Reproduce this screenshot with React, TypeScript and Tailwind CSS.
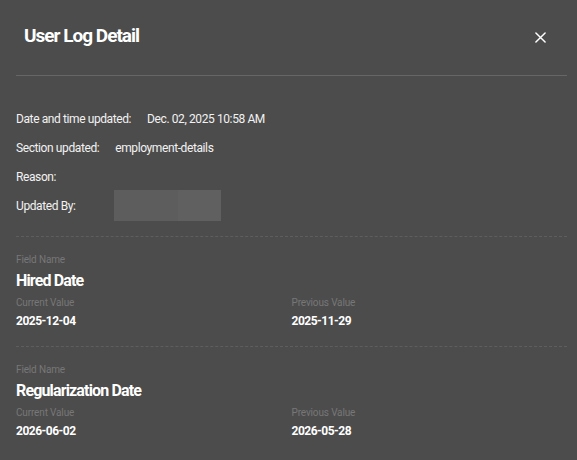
import React from 'react';

type FieldChange = {
  name: string;
  current: string;
  previous: string;
};

const changes: FieldChange[] = [
  { name: 'Hired Date', current: '2025-12-04', previous: '2025-11-29' },
  { name: 'Regularization Date', current: '2026-06-02', previous: '2026-05-28' },
];

function CloseIcon() {
  return (
    <svg width="11" height="11" viewBox="0 0 12 12" fill="none" stroke="currentColor" strokeWidth="1.6" strokeLinecap="round">
      <path d="M1 1L11 11M11 1L1 11" />
    </svg>
  );
}

function InfoRow({ label, children }: { label: string; children?: React.ReactNode }) {
  return (
    <div className="flex h-[29px] items-center gap-4 text-[12px] text-[#f2f2f2]">
      <span>{label}</span>
      {children}
    </div>
  );
}

export default function App() {
  return (
    <div
      className="min-h-[460px] w-full bg-[#4c4c4c] text-white"
      style={{ fontFamily: 'Roboto, "Liberation Sans", sans-serif' }}
    >
      {/* header */}
      <div className="flex items-center justify-between pl-6 pr-[31px] pt-6">
        <h1 className="text-[19px] font-bold leading-6 tracking-[-1px]">User Log Detail</h1>
        <button className="mt-[2px] text-white">
          <CloseIcon />
        </button>
      </div>
      <div className="ml-4 mr-[10px] mt-[27px] border-t border-[#666666]" />

      {/* summary */}
      <div className="px-4 pt-[28px] tracking-[-0.4px]">
        <InfoRow label="Date and time updated:">
          <span>Dec. 02, 2025 10:58 AM</span>
        </InfoRow>
        <InfoRow label="Section updated:">
          <span>employment-details</span>
        </InfoRow>
        <InfoRow label="Reason:" />
        <InfoRow label="Updated By:">
          <div className="ml-[22px] flex h-[31px] w-[107px]">
            <div className="w-[64px] bg-[#5d5d5d]" />
            <div className="flex-1 bg-[#606060]" />
          </div>
        </InfoRow>
      </div>

      {/* field changes */}
      <div className="ml-4 mr-[10px] mt-4">
        {changes.map((c) => (
          <div key={c.name} className="border-t border-dashed border-[#5e5e5e] pb-[17px] pt-4">
            <div className="text-[10px] leading-[14px] tracking-[-0.15px] text-[#777777]">Field Name</div>
            <div className="mt-1 text-[16px] font-bold leading-5 tracking-[-0.85px]">{c.name}</div>
            <div className="mt-[5px] grid grid-cols-2">
              <div>
                <div className="text-[10px] leading-[14px] tracking-[-0.15px] text-[#777777]">Current Value</div>
                <div className="mt-[3px] text-[12px] font-bold leading-4 tracking-[-0.5px]">{c.current}</div>
              </div>
              <div>
                <div className="text-[10px] leading-[14px] tracking-[-0.15px] text-[#777777]">Previous Value</div>
                <div className="mt-[3px] text-[12px] font-bold leading-4 tracking-[-0.5px]">{c.previous}</div>
              </div>
            </div>
          </div>
        ))}
      </div>
    </div>
  );
}
